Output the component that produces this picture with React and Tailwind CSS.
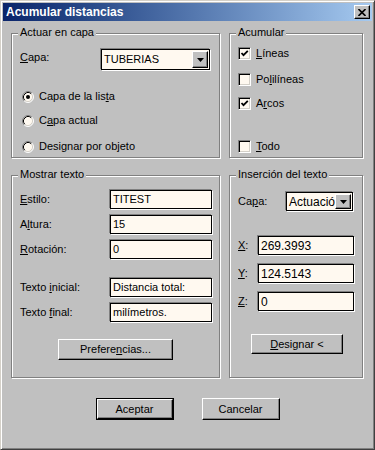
import React from 'react';

// Classic Win9x-style dialog: "Acumular distancias"

const inputCls =
  'flex items-center overflow-hidden whitespace-nowrap border border-black bg-[#fff9f0] pl-[2px] shadow-[-1px_-1px_0_#808080,1px_1px_0_#ffffff]';
const raisedCls =
  'flex items-center justify-center border border-t-white border-l-white border-r-black border-b-black bg-[#c0c0c0] shadow-[inset_-1px_-1px_0_#808080]';

function U({ children }) {
  return <span className="underline underline-offset-[1px]">{children}</span>;
}

function Group({ title, className, children }) {
  return (
    <div className={`relative border border-[#808080] shadow-[inset_1px_1px_0_#ffffff,1px_1px_0_#ffffff] ${className}`}>
      <span className="absolute -top-[8px] left-[6px] bg-[#c0c0c0] px-[2px] leading-[13px]">{title}</span>
      {children}
    </div>
  );
}

function Arrow() {
  return (
    <svg width="7" height="4" viewBox="0 0 7 4">
      <polygon points="0,0 7,0 3.5,4" fill="#000" />
    </svg>
  );
}

function Combo({ text, className, textClass = '' }) {
  return (
    <div className={`flex items-center border border-black bg-[#fff9f0] shadow-[-1px_-1px_0_#808080,1px_1px_0_#ffffff] ${className}`}>
      <span className={`flex-1 overflow-hidden whitespace-nowrap pl-[2px] ${textClass}`}>{text}</span>
      <div className={`${raisedCls} mr-px h-[calc(100%-2px)] w-[16px] shrink-0`}>
        <Arrow />
      </div>
    </div>
  );
}

function Radio({ checked, children, className = '' }) {
  return (
    <div className={`flex h-[13px] items-center gap-[5px] pl-[10px] ${className}`}>
      <svg width="12" height="12" viewBox="0 0 12 12">
        <circle cx="6" cy="6" r="5" fill="#fff9f0" />
        <path d="M2.11 9.89 A5.5 5.5 0 0 1 9.89 2.11" stroke="#808080" fill="none" />
        <path d="M2.82 9.18 A4.5 4.5 0 0 1 9.18 2.82" stroke="#000" fill="none" />
        <path d="M9.89 2.11 A5.5 5.5 0 0 1 2.11 9.89" stroke="#fff" fill="none" />
        <path d="M9.18 2.82 A4.5 4.5 0 0 1 2.82 9.18" stroke="#d4d0c8" fill="none" />
        {checked && <circle cx="6" cy="6" r="2" fill="#000" />}
      </svg>
      <span className="leading-[13px]">{children}</span>
    </div>
  );
}

function Check({ checked, children, className = '' }) {
  return (
    <div className={`flex h-[13px] items-center gap-[5px] pl-[8px] ${className}`}>
      <div className="flex h-[13px] w-[13px] items-center justify-center border border-t-[#808080] border-l-[#808080] border-b-white border-r-white bg-[#fff9f0] shadow-[inset_1px_1px_0_#000,inset_-1px_-1px_0_#d4d0c8]">
        {checked && (
          <svg width="9" height="9" viewBox="0 0 9 9">
            <path d="M1.5 4 L3.5 6.2 L7.8 1.8" stroke="#000" strokeWidth="1.8" fill="none" />
          </svg>
        )}
      </div>
      <span className="leading-[13px]">{children}</span>
    </div>
  );
}

function Field({ label, value, labelW, inputW, className = '', valueClass = '' }) {
  return (
    <div className={`flex h-[19px] items-center ${className}`}>
      <span className={`${labelW} leading-[13px]`}>{label}</span>
      <div className={`${inputCls} ${inputW} h-[19px] ${valueClass}`}>{value}</div>
    </div>
  );
}

export default function App() {
  return (
    <div className="h-[450px] w-[375px] border border-t-[#d4d0c8] border-l-[#d4d0c8] border-r-[#404040] border-b-[#404040] bg-[#c0c0c0] p-[2px] font-['Liberation_Sans',Arial,sans-serif] text-[11px] text-black shadow-[inset_1px_1px_0_#ffffff,inset_-1px_-1px_0_#808080]">
      {/* Title bar */}
      <div className="flex h-[18px] items-center justify-between bg-gradient-to-r from-[#0a246a] to-[#a6caf0] pl-[3px]">
        <span className="text-[12px] font-bold leading-[18px] text-white">Acumular distancias</span>
        <div className={`${raisedCls} mr-[2px] h-[14px] w-[16px]`}>
          <svg width="8" height="7" viewBox="0 0 8 7">
            <path d="M0.5 0 L7.5 7 M7.5 0 L0.5 7" stroke="#000" strokeWidth="1.6" />
          </svg>
        </div>
      </div>

      <div className="pl-[8px]">
        {/* Top row */}
        <div className="mt-[12px] flex gap-[9px]">
          <Group title="Actuar en capa" className="h-[125px] w-[209px]">
            <div className="mt-[15px] flex h-[21px] items-start pl-[8px]">
              <span className="w-[81px] pt-[2px] leading-[13px]">
                <U>C</U>apa:
              </span>
              <Combo text="TUBERIAS" className="h-[21px] w-[109px]" />
            </div>
            <Radio checked className="mt-[20px]">
              Capa de la lis<U>t</U>a
            </Radio>
            <Radio className="mt-[11px]">
              C<U>a</U>pa actual
            </Radio>
            <Radio className="mt-[13px]">Designar por objeto</Radio>
          </Group>

          <Group title="Acumular" className="h-[125px] w-[134px]">
            <Check checked className="mt-[13px]">
              <U>L</U>íneas
            </Check>
            <Check className="mt-[13px]">
              Po<U>l</U>ilíneas
            </Check>
            <Check checked className="mt-[11px]">
              A<U>r</U>cos
            </Check>
            <Check className="mt-[30px]">
              <U>T</U>odo
            </Check>
          </Group>
        </div>

        {/* Bottom row */}
        <div className="mt-[17px] flex gap-[9px]">
          <Group title="Mostrar texto" className="h-[203px] w-[209px]">
            <div className="pl-[8px] pt-[14px]">
              <Field label={<><U>E</U>stilo:</>} value="TITEST" labelW="w-[90px]" inputW="w-[102px]" />
              <Field label={<>A<U>l</U>tura:</>} value="15" labelW="w-[90px]" inputW="w-[102px]" className="mt-[6px]" />
              <Field label={<><U>R</U>otación:</>} value="0" labelW="w-[90px]" inputW="w-[102px]" className="mt-[6px]" />
              <Field label={<>Texto <U>i</U>nicial:</>} value="Distancia total:" labelW="w-[90px]" inputW="w-[102px]" className="mt-[19px]" />
              <Field label={<>Texto <U>f</U>inal:</>} value="milímetros." labelW="w-[90px]" inputW="w-[102px]" className="mt-[6px]" />
              <div className={`${raisedCls} ml-[38px] mt-[17px] h-[21px] w-[115px]`}>
                Prefere<U>n</U>cias...
              </div>
            </div>
          </Group>

          <Group title="Inserción del texto" className="h-[203px] w-[134px]">
            <div className="pl-[8px] pt-[16px]">
              <div className="flex h-[19px] items-center">
                <span className="w-[48px] leading-[13px]">
                  Ca<U>p</U>a:
                </span>
                <Combo text="Actuación" className="h-[19px] w-[67px]" textClass="text-[12px]" />
              </div>
              <Field label={<><U>X</U>:</>} value="269.3993" labelW="w-[20px]" inputW="w-[96px]" className="mt-[25px]" valueClass="text-[12px]" />
              <Field label={<><U>Y</U>:</>} value="124.5143" labelW="w-[20px]" inputW="w-[96px]" className="mt-[9px]" valueClass="text-[12px]" />
              <Field label={<><U>Z</U>:</>} value="0" labelW="w-[20px]" inputW="w-[96px]" className="mt-[9px]" valueClass="text-[12px]" />
              <div className={`${raisedCls} ml-[13px] mt-[23px] h-[20px] w-[92px]`}>
                <U>D</U>esignar &lt;
              </div>
            </div>
          </Group>
        </div>

        {/* Dialog buttons */}
        <div className="mt-[20px] flex justify-center gap-[28px] pr-[8px]">
          <div className="h-[22px] w-[78px] border border-black">
            <div className={`${raisedCls} h-full w-full`}>Aceptar</div>
          </div>
          <div className={`${raisedCls} h-[22px] w-[78px]`}>Cancelar</div>
        </div>
      </div>
    </div>
  );
}
